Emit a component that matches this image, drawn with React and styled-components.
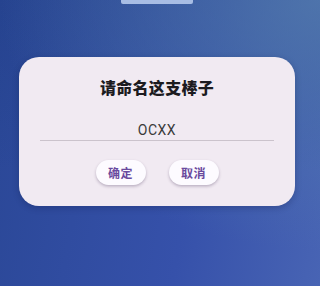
import React, { useState } from 'react';
import styled, { createGlobalStyle } from 'styled-components';

const GlobalStyle = createGlobalStyle`
  html, body {
    margin: 0;
    padding: 0;
  }
  body {
    font-family: Roboto, "Noto Sans CJK SC", sans-serif;
  }
`;

const Screen = styled.div`
  width: 320px;
  height: 286px;
  overflow: hidden;
  display: flex;
  flex-direction: column;
  padding-left: 19px;
  box-sizing: border-box;
  background:
    radial-gradient(ellipse 320px 250px at 320px 0px, rgba(84, 124, 174, 0.8), rgba(84, 124, 174, 0) 100%),
    linear-gradient(to bottom, rgba(30, 60, 130, 0.35), rgba(30, 60, 130, 0) 60%),
    linear-gradient(100deg, #2a4796 0%, #3651aa 60%, #4864b4 100%);
`;

const Column = styled.div`
  width: 276px;
  display: flex;
  flex-direction: column;
  align-items: center;
`;

const Handle = styled.div`
  width: 72px;
  height: 4px;
  background: #a8bde4;
  border-radius: 0 0 2px 2px;
`;

const Dialog = styled.div`
  margin-top: 53px;
  width: 100%;
  box-sizing: border-box;
  background: #f1eaf2;
  border-radius: 20px;
  padding: 20px 21px 21px;
  display: flex;
  flex-direction: column;
  align-items: center;
  box-shadow: 0 2px 6px rgba(10, 20, 60, 0.25);
`;

const Title = styled.h2`
  margin: 0;
  font-family: "Noto Sans CJK SC", sans-serif;
  font-size: 16px;
  line-height: 20px;
  font-weight: 900;
  color: #1c1b1f;
  letter-spacing: 0.3px;
`;

const NameInput = styled.input`
  margin-top: 23px;
  width: 100%;
  height: 20px;
  box-sizing: content-box;
  border: none;
  border-bottom: 1.5px solid #cbc3cc;
  background: transparent;
  padding: 0;
  text-align: center;
  font-family: Roboto, sans-serif;
  font-size: 14px;
  letter-spacing: 0.5px;
  color: #3a3a3a;
  outline: none;
`;

const Actions = styled.div`
  margin-top: 19px;
  display: flex;
  gap: 23px;
`;

const ActionButton = styled.button`
  width: 50px;
  height: 25px;
  border: none;
  border-radius: 13px;
  background: #fdfbff;
  box-shadow: 0 1.5px 3px rgba(60, 40, 80, 0.3);
  font-family: "Noto Sans CJK SC", sans-serif;
  font-size: 12px;
  font-weight: 700;
  color: #6a4a9e;
  letter-spacing: 0.5px;
  padding: 0;
  cursor: pointer;
`;

export default function App() {
  const [name, setName] = useState('OCXX');
  return (
    <>
      <GlobalStyle />
      <Screen>
        <Column>
          <Handle />
          <Dialog>
            <Title>请命名这支棒子</Title>
            <NameInput value={name} onChange={(e) => setName(e.target.value)} />
            <Actions>
              <ActionButton>确定</ActionButton>
              <ActionButton>取消</ActionButton>
            </Actions>
          </Dialog>
        </Column>
      </Screen>
    </>
  );
}
